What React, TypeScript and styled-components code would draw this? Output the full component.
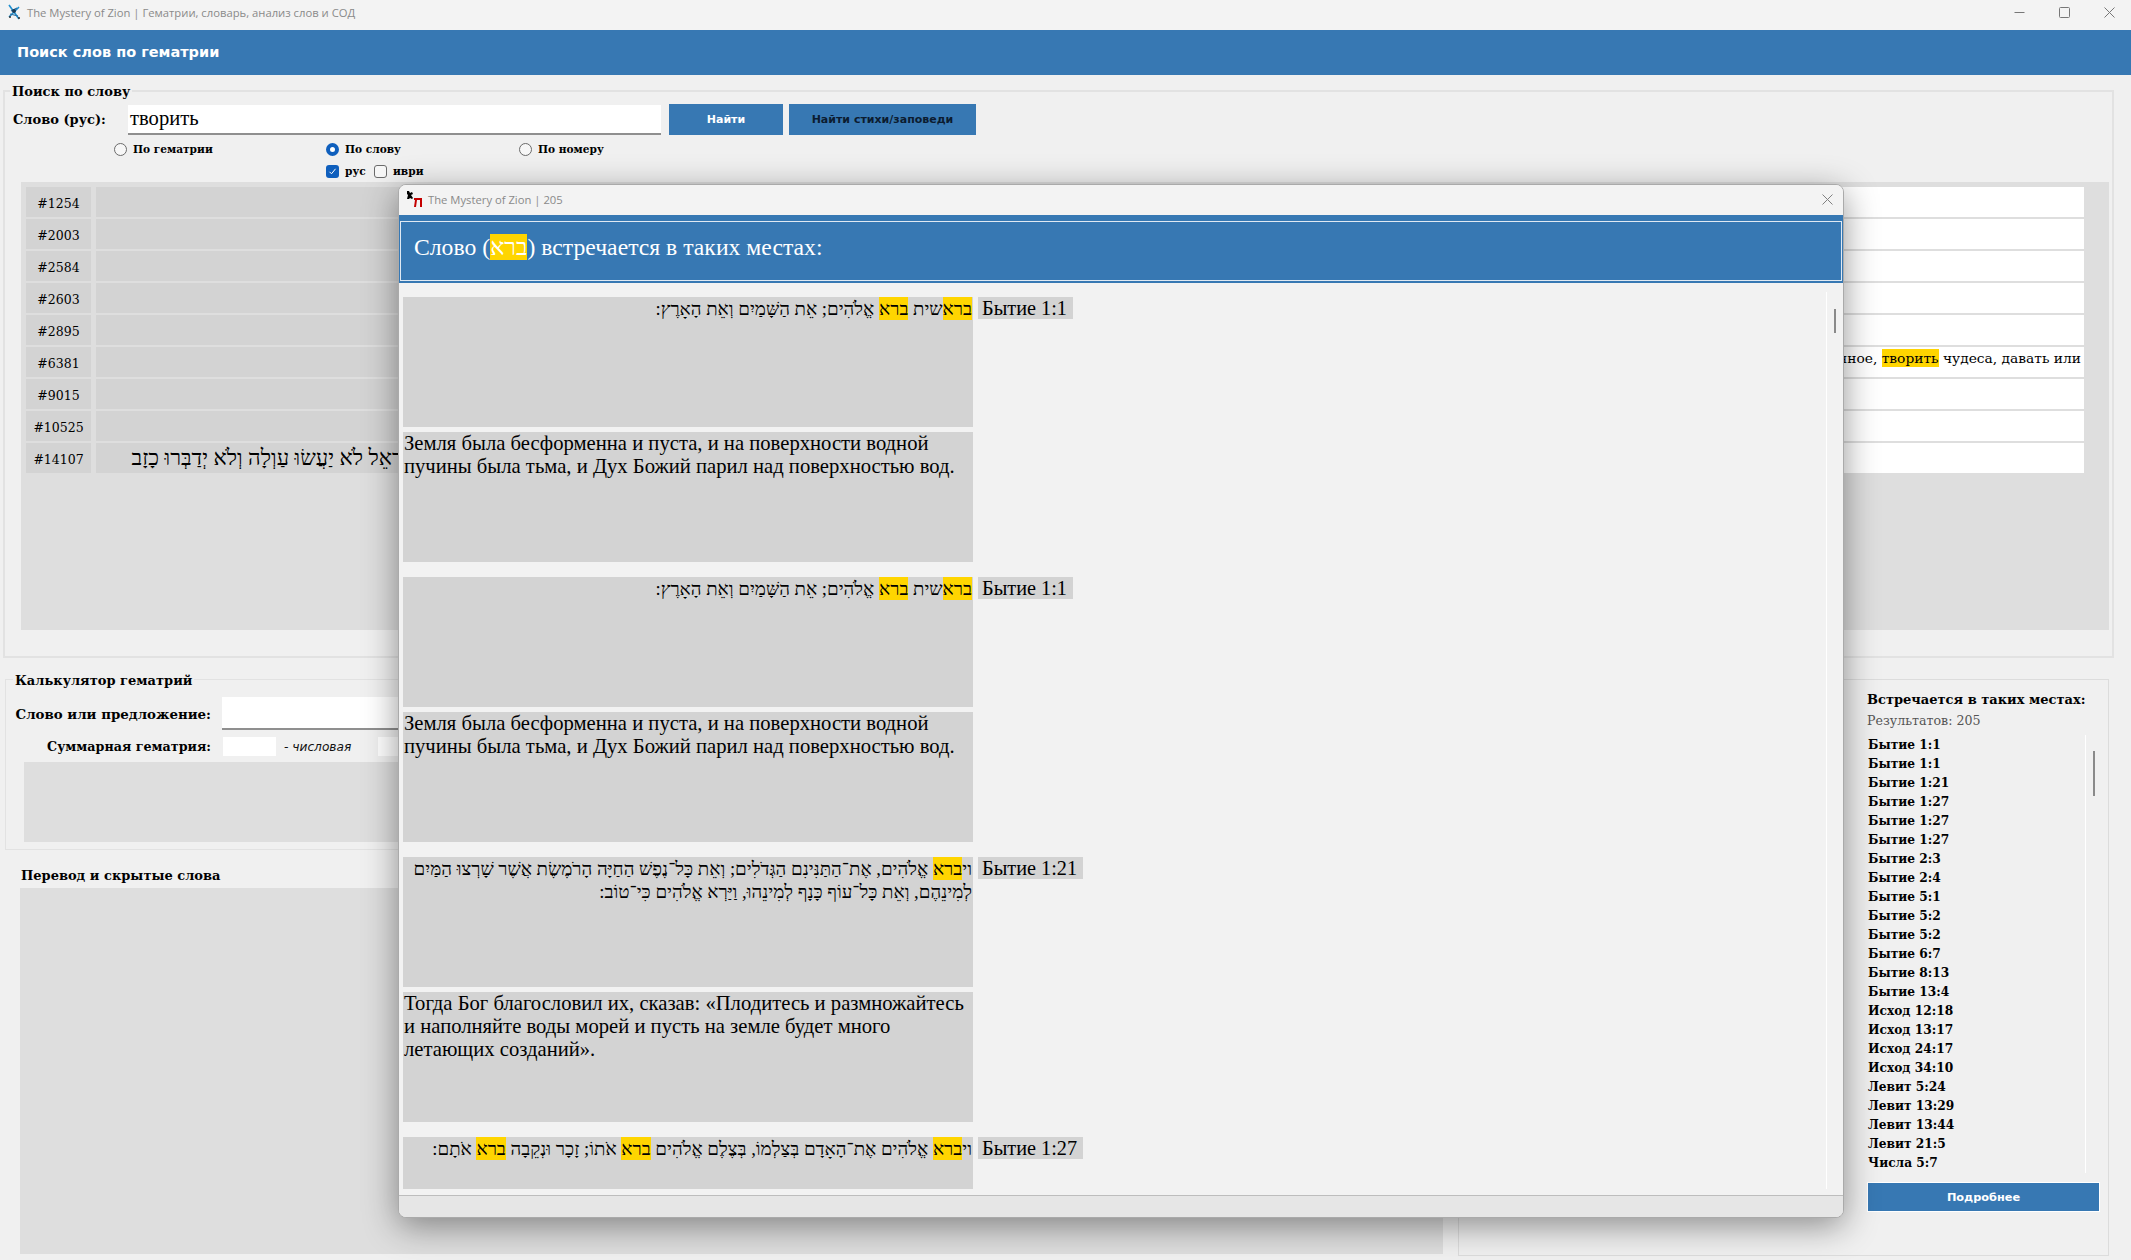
import React from "react";
import styled, { createGlobalStyle } from "styled-components";

const Global = createGlobalStyle`
  html, body { margin: 0; padding: 0; background: #f0f0f0; overflow: hidden; }
  * { box-sizing: border-box; }
`;

const serif = `"DejaVu Serif", serif`;
const times = `"Liberation Serif", serif`;
const blue = "#3778b3";

const Page = styled.div`
  position: relative; width: 2131px; height: 1260px; overflow: hidden;
  display: flex; flex-direction: column; background: #f0f0f0; font-family: ${serif};
`;
const TitleBar = styled.div`
  flex: 0 0 30px; display: flex; align-items: center; padding: 0 0 6px 7px; margin-right: -1px; background: #f3f3f3;
`;
const TitleText = styled.span`
  font: 11.25px "Open Sans", sans-serif; color: #8a8a8a; margin-left: 6px; flex: 1;
`;
const WinButton = styled.div`
  width: 45px; height: 24px; display: flex; align-items: center; justify-content: center;
`;
const Banner = styled.div`
  flex: 0 0 45px; background: ${blue}; color: #fff; display: flex; align-items: center; padding: 0 0 2px 17px;
  font: bold 14.5px "DejaVu Sans", sans-serif;
`;
const Group = styled.fieldset<{ $h: number }>`
  margin: 0; padding: 0; min-width: 0; height: ${(p) => p.$h}px; border: 2px solid #e2e2e2;
`;
const Legend = styled.legend`
  font: bold 13px/16px ${serif}; color: #000; padding: 0 2px;
`;
const SearchGroup = styled(Group)`
  margin: 8px 17px 0 3px; padding: 0 3px 0 16px;
`;
const SearchLegend = styled(Legend)`
  margin-left: -11px; position: relative; top: 1px;
`;
const SearchRow = styled.div`
  display: flex; align-items: center; height: 31px; margin: 5px 0 0 -14px;
`;
const FieldLabel = styled.label`
  font: bold 13px ${serif}; color: #000; width: 121px; padding-left: 6px; white-space: nowrap;
`;
const WordInput = styled.div`
  width: 533px; height: 30px; background: #fff; border-bottom: 2px solid #8f8f8f;
  font: 20.6px/27px ${times}; padding-left: 2px; color: #000;
`;
const ActionButton = styled.button<{ $w: number; $dark?: boolean }>`
  width: ${(p) => p.$w}px; height: 31px; margin-left: ${(p) => (p.$dark ? 6 : 8)}px; border: 0; padding: 0;
  background: ${blue}; color: ${(p) => (p.$dark ? "#0c1c30" : "#fff")};
  font: bold 11px "DejaVu Sans", sans-serif;
`;
const OptionRow = styled.div<{ $top: number; $left: number }>`
  display: flex; align-items: center; height: 16px; margin: ${(p) => p.$top}px 0 0 ${(p) => p.$left}px;
  font: bold 10.6px ${serif}; color: #000;
`;
const Option = styled.span<{ $w: number }>`
  width: ${(p) => p.$w}px; display: flex; align-items: center; gap: 6px;
`;
const Radio = styled.span<{ $on?: boolean }>`
  width: 13px; height: 13px; border-radius: 50%; flex: none;
  background: ${(p) => (p.$on ? "#fff" : "#f7f7f7")};
  border: ${(p) => (p.$on ? "4px solid #0f5fbd" : "1px solid #6b6b6b")};
`;
const Check = styled.span<{ $on?: boolean }>`
  width: 13px; height: 13px; border-radius: 3px; flex: none; display: flex; align-items: center; justify-content: center;
  background: ${(p) => (p.$on ? "#0f5fbd" : "#f7f7f7")};
  border: ${(p) => (p.$on ? "0" : "1px solid #6b6b6b")};
`;
const ResultPanel = styled.div`
  background: #dedede; height: 448px; margin-top: 3px; padding: 5px; display: flex; flex-direction: column; gap: 2px;
`;
const ResultRow = styled.div`
  display: flex; height: 30px; gap: 5px; flex: none;
`;
const IdCell = styled.div`
  width: 65px; background: #d3d3d3; font: 12.5px/33px ${serif}; color: #000; text-align: center;
`;
const HebrewCell = styled.div`
  width: 428px; background: #d3d3d3; font: 22px/30px ${times}; color: #000; text-align: center; direction: rtl; white-space: nowrap; overflow: hidden;
`;
const MeaningCell = styled.div`
  flex: none; width: 1555px; background: #fff; font: 13.8px/22px ${serif}; color: #000; text-align: right; padding-right: 3px; white-space: nowrap; overflow: hidden;
  mark { padding: 1px 0; }
`;
const Gold = styled.mark`
  background: #ffd500; color: inherit; padding: 0;
`;

const Lower = styled.div`
  display: flex; margin: 13px 22px 0 5px; gap: 9px; flex: 1; min-height: 0;
`;
const LeftColumn = styled.div`
  width: 1444px; display: flex; flex-direction: column;
`;
const CalcGroup = styled(Group)`
  padding: 0 0 0 17px; border-width: 1px;
`;
const CalcLegend = styled(Legend)`
  margin-left: -10px; position: relative; top: 2px;
`;
const CalcRow = styled.div<{ $top: number }>`
  display: flex; align-items: center; margin: ${(p) => p.$top}px 0 0 -10px;
`;
const CalcLabel = styled.span<{ $size: number }>`
  width: 198px; margin-right: 1px; text-align: right; font: bold ${(p) => p.$size}px ${serif}; color: #000; white-space: nowrap;
`;
const CalcInput = styled.div`
  flex: 1; height: 33px; margin: 0 6px 0 10px; background: #fff; border-bottom: 2px solid #8f8f8f;
`;
const SmallBox = styled.div`
  width: 53px; height: 19px; background: #fff; margin-left: 11px;
`;
const Hint = styled.span<{ $w: number }>`
  font: italic 12.2px "DejaVu Sans", sans-serif; color: #111; width: ${(p) => p.$w}px; padding-left: 8px;
`;
const CalcOutput = styled.div`
  height: 80px; margin: 6px 6px 0 1px; background: #dedede;
`;
const SectionHeading = styled.div`
  font: bold 13px/16px ${serif}; color: #000; margin: 18px 0 4px 16px; height: 16px;
`;
const TranslationPanel = styled.div`
  height: 366px; margin: 0 6px 0 15px; background: #dedede;
`;
const PlacesGroup = styled.section`
  flex: 1; height: 577px; margin-top: 8px; border: 1px solid #dcdcdc; padding: 12px 8px 0 408px;
`;
const PlacesTitle = styled.div`
  font: bold 13px/16px ${serif}; color: #000; white-space: nowrap;
`;
const PlacesCount = styled.div`
  font: 12.6px/16px ${serif}; color: #555; margin-top: 5px;
`;
const PlacesScroller = styled.div`
  display: flex; height: 438px; margin-top: 6px;
`;
const PlacesList = styled.ul`
  list-style: none; margin: 0; padding: 0 0 0 1px; width: 219px; height: 100%; overflow: hidden;
  border-right: 1px solid #fff;
`;
const PlaceItem = styled.li`
  font: bold 12.2px/19px ${serif}; color: #000; height: 19px; position: relative; top: 1px;
`;
const Thumb = styled.div<{ $top: number; $h: number }>`
  width: 2px; height: ${(p) => p.$h}px; margin: ${(p) => p.$top}px 0 0 7px; background: #8a8a8a;
`;
const MoreButton = styled.button`
  display: block; width: 233px; height: 30px; margin-top: 9px; padding: 0; background: ${blue}; border: 1px solid #fff; color: #fff;
  font: bold 11.3px "DejaVu Sans", sans-serif;
`;

/* modal */
const Modal = styled.div`
  position: absolute; left: 398px; top: 184px; width: 1446px; height: 1034px;
  display: flex; flex-direction: column; background: #f2f2f2; border: 1px solid #aaa; border-radius: 8px; overflow: hidden;
  box-shadow: 0 8px 34px rgba(0,0,0,.42);
`;
const ModalBar = styled.div`
  flex: 0 0 30px; display: flex; align-items: center; padding: 0 0 1px 6px; background: #f3f3f3;
`;
const ModalTitle = styled.span`
  font: 11.25px "Open Sans", sans-serif; color: #8a8a8a; margin-left: 5px; flex: 1;
`;
const ModalClose = styled.div`
  width: 32px; display: flex; justify-content: center;
`;
const ModalHeadWrap = styled.div`
  flex: 0 0 68px; background: ${blue}; padding: 6px 0 2px 0;
`;
const ModalHead = styled.div`
  height: 60px; margin: 0 1px; border: 1px solid #dfe9f3; background: ${blue}; color: #fff;
  font: 23.7px/51px ${times}; padding-left: 13px;
`;
const ModalBody = styled.div`
  flex: 1; min-height: 0; display: flex; overflow: hidden; padding-bottom: 6px;
`;
const VerseArea = styled.div`
  width: 1428px; margin-top: 9px; padding: 5px 0 0 4px; border-right: 1px solid #fff; overflow: hidden;
  display: flex; flex-direction: column; gap: 15px;
`;
const VerseRow = styled.div`
  display: flex; gap: 5px; align-items: flex-start; flex: none;
`;
const VerseTexts = styled.div`
  width: 570px; display: flex; flex-direction: column; gap: 5px;
`;
const HebrewVerse = styled.div`
  height: 130px; background: #d3d3d3; color: #000; font: 18.7px/23px ${times}; padding: 0 1px; direction: rtl;
  mark { padding: 1px 0; }
`;
const RussianVerse = styled.div`
  height: 130px; background: #d3d3d3; color: #000; font: 20.65px/23px ${times}; padding-left: 1px;
`;
const VerseRef = styled.div`
  height: 22px; background: #d3d3d3; font: 20.3px/22px ${times}; color: #000; padding: 0 6px 0 4px; white-space: nowrap;
`;
const ModalThumb = styled.div`
  width: 2px; height: 24px; margin: 26px 0 0 7px; background: #8a8a8a;
`;
const ModalFoot = styled.div`
  flex: 0 0 22px; background: #e6e6e6; border-top: 1px solid #bdbdbd;
`;

const Ids = ["#1254","#2003","#2584","#2603","#2895","#6381","#9015","#10525","#14107"];
const Places = ["Бытие 1:1","Бытие 1:1","Бытие 1:21","Бытие 1:27","Бытие 1:27","Бытие 1:27","Бытие 2:3","Бытие 2:4","Бытие 5:1","Бытие 5:2","Бытие 5:2","Бытие 6:7","Бытие 8:13","Бытие 13:4","Исход 12:18","Исход 13:17","Исход 24:17","Исход 34:10","Левит 5:24","Левит 13:29","Левит 13:44","Левит 21:5","Числа 5:7"];

const He11 = () => (<><Gold>ברא</Gold>שית <Gold>ברא</Gold> אֱלֹהִים; אֵת הַשָּׁמַיִם וְאֵת הָאָרֶץ:</>);
const Ru11 = "Земля была бесформенна и пуста, и на поверхности водной пучины была тьма, и Дух Божий парил над поверхностью вод.";

const Logo = () => (
  <svg width="14" height="16" viewBox="0 0 14 16">
    <path d="M2 1l10 14M12 3L2 13" stroke="#1f8fd0" strokeWidth="1.6" fill="none" />
    <path d="M4 7l6-3M3 10l8 2" stroke="#2a6d9e" strokeWidth="1.2" fill="none" />
    <circle cx="7" cy="7" r="2" fill="#1b3a55" />
    <circle cx="3" cy="13" r="1" fill="#333" />
    <circle cx="12" cy="14" r="1" fill="#333" />
  </svg>
);
const ModalLogo = () => (
  <svg width="18" height="17" viewBox="0 0 18 17">
    <path d="M2 0h2l1 2 2-1 1 2-2 1 2 3-1 1-2-1-1 1H2l1-4-1-1z" fill="#000" />
    <path d="M9 7h8v9h-2V9h-3l-1 7H9l1-7H9z" fill="#c40000" />
  </svg>
);
const CloseGlyph = ({ color }: { color: string }) => (
  <svg width="11" height="11"><path d="M0.5 0.5l10 10M10.5 0.5l-10 10" stroke={color} /></svg>
);

export default function App() {
  return (
    <Page>
      <Global />
      <TitleBar>
        <Logo />
        <TitleText>The Mystery of Zion | Гематрии, словарь, анализ слов и СОД</TitleText>
        <WinButton><svg width="11" height="11"><path d="M0.5 5.5h10" stroke="#777" /></svg></WinButton>
        <WinButton><svg width="11" height="11"><rect x="0.5" y="0.5" width="10" height="10" rx="1" fill="none" stroke="#777" /></svg></WinButton>
        <WinButton><CloseGlyph color="#777" /></WinButton>
      </TitleBar>
      <Banner>Поиск слов по гематрии</Banner>
      <SearchGroup $h={575}>
        <SearchLegend>Поиск по слову</SearchLegend>
        <SearchRow>
          <FieldLabel>Слово (рус):</FieldLabel>
          <WordInput>творить</WordInput>
          <ActionButton $w={114}>Найти</ActionButton>
          <ActionButton $w={187} $dark>Найти стихи/заповеди</ActionButton>
        </SearchRow>
        <OptionRow $top={6} $left={93}>
          <Option $w={212}><Radio />По гематрии</Option>
          <Option $w={193}><Radio $on />По слову</Option>
          <Option $w={160}><Radio />По номеру</Option>
        </OptionRow>
        <OptionRow $top={6} $left={305}>
          <Option $w={48}>
            <Check $on><svg width="9" height="9" viewBox="0 0 9 9"><path d="M1.5 4.8l2 2 4-5" stroke="#fff" fill="none" /></svg></Check>рус
          </Option>
          <Option $w={60}><Check />иври</Option>
        </OptionRow>
        <ResultPanel>
          {Ids.map((id, i) => (
            <ResultRow key={id}>
              <IdCell>{id}</IdCell>
              <HebrewCell>{i === 8 ? "שְׁאֵרִית יִשְׂרָאֵל לֹא יַעֲשׂוּ עַוְלָה וְלֹא יְדַבְּרוּ כָזָב" : ""}</HebrewCell>
              <MeaningCell>
                {i === 5 ? <>сверхъестественное, <Gold>творить</Gold> чудеса, давать или</> : ""}
              </MeaningCell>
            </ResultRow>
          ))}
        </ResultPanel>
      </SearchGroup>
      <Lower>
        <LeftColumn>
          <CalcGroup $h={179}>
            <CalcLegend>Калькулятор гематрий</CalcLegend>
            <CalcRow $top={10}>
              <CalcLabel $size={13.35}>Слово или предложение:</CalcLabel>
              <CalcInput />
            </CalcRow>
            <CalcRow $top={7}>
              <CalcLabel $size={12.7}>Суммарная гематрия:</CalcLabel>
              <SmallBox />
              <Hint $w={91}>- числовая</Hint>
              <SmallBox />
            </CalcRow>
            <CalcOutput />
          </CalcGroup>
          <SectionHeading>Перевод и скрытые слова</SectionHeading>
          <TranslationPanel />
        </LeftColumn>
        <PlacesGroup>
          <PlacesTitle>Встречается в таких местах:</PlacesTitle>
          <PlacesCount>Результатов: 205</PlacesCount>
          <PlacesScroller>
            <PlacesList>
              {Places.map((p, i) => <PlaceItem key={i}>{p}</PlaceItem>)}
            </PlacesList>
            <Thumb $top={16} $h={45} />
          </PlacesScroller>
          <MoreButton>Подробнее</MoreButton>
        </PlacesGroup>
      </Lower>

      <Modal>
        <ModalBar>
          <ModalLogo />
          <ModalTitle>The Mystery of Zion | 205</ModalTitle>
          <ModalClose><CloseGlyph color="#808080" /></ModalClose>
        </ModalBar>
        <ModalHeadWrap>
          <ModalHead>Слово (<Gold>ברא</Gold>) встречается в таких местах:</ModalHead>
        </ModalHeadWrap>
        <ModalBody>
          <VerseArea>
            <VerseRow>
              <VerseTexts>
                <HebrewVerse><He11 /></HebrewVerse>
                <RussianVerse>{Ru11}</RussianVerse>
              </VerseTexts>
              <VerseRef>Бытие 1:1</VerseRef>
            </VerseRow>
            <VerseRow>
              <VerseTexts>
                <HebrewVerse><He11 /></HebrewVerse>
                <RussianVerse>{Ru11}</RussianVerse>
              </VerseTexts>
              <VerseRef>Бытие 1:1</VerseRef>
            </VerseRow>
            <VerseRow>
              <VerseTexts>
                <HebrewVerse>וי<Gold>ברא</Gold> אֱלֹהִים, אֶת־הַתַּנִּינִם הַגְּדֹלִים; וְאֵת כָּל־נֶפֶשׁ הַחַיָּה הָרֹמֶשֶׂת אֲשֶׁר שָׁרְצוּ הַמַּיִם לְמִינֵהֶם, וְאֵת כָּל־עוֹף כָּנָף לְמִינֵהוּ, וַיַּרְא אֱלֹהִים כִּי־טוֹב:</HebrewVerse>
                <RussianVerse>Тогда Бог благословил их, сказав: «Плодитесь и размножайтесь и наполняйте воды морей и пусть на земле будет много летающих созданий».</RussianVerse>
              </VerseTexts>
              <VerseRef>Бытие 1:21</VerseRef>
            </VerseRow>
            <VerseRow>
              <VerseTexts>
                <HebrewVerse>וי<Gold>ברא</Gold> אֱלֹהִים אֶת־הָאָדָם בְּצַלְמוֹ, בְּצֶלֶם אֱלֹהִים <Gold>ברא</Gold> אֹתוֹ; זָכָר וּנְקֵבָה <Gold>ברא</Gold> אֹתָם:</HebrewVerse>
              </VerseTexts>
              <VerseRef>Бытие 1:27</VerseRef>
            </VerseRow>
          </VerseArea>
          <ModalThumb />
        </ModalBody>
        <ModalFoot />
      </Modal>
    </Page>
  );
}
